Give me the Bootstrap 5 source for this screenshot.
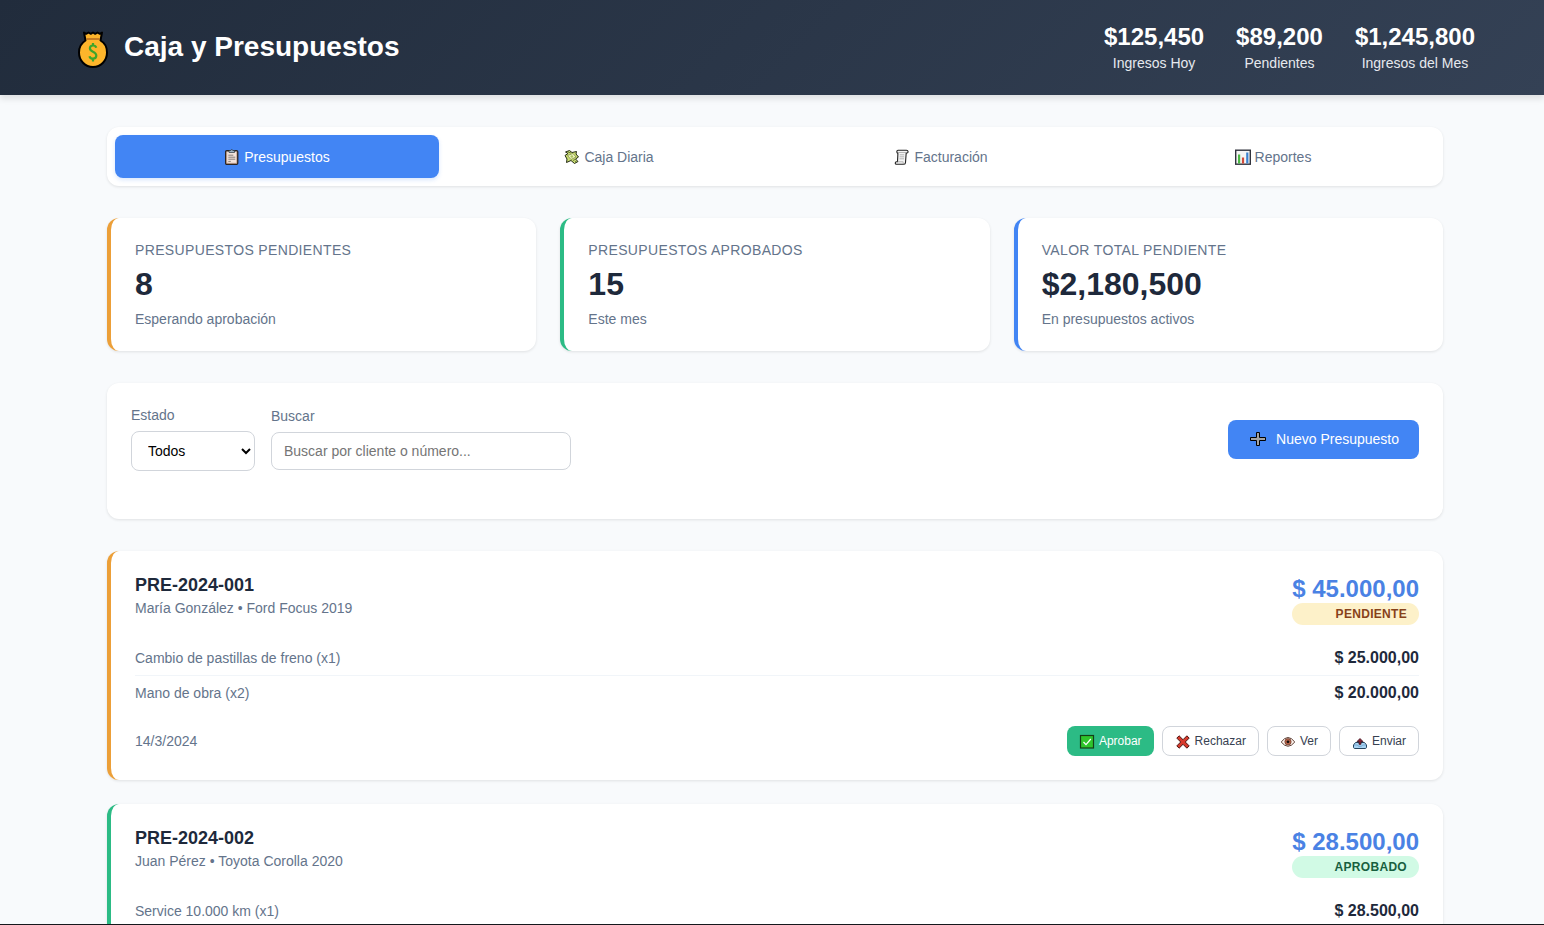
<!DOCTYPE html>
<html lang="es">
<head>
<meta charset="utf-8">
<meta name="viewport" content="width=device-width, initial-scale=1">
<title>Caja y Presupuestos</title>
<link href="https://cdn.jsdelivr.net/npm/bootstrap@5.3.0/dist/css/bootstrap.min.css" rel="stylesheet">
<style>
  :root { --ink: #1e293b; --slate: #64748b; --blue: #4285f4; --green: #2cbb85; --orange: #ec9f38; }
  body {
    font-family: "Liberation Sans", Arial, sans-serif;
    font-size: 14px; line-height: 16px; color: var(--ink);
    background: #f8fafc; border-bottom: 1px solid #15181c;
  }
  svg { flex: none; }
  .page-head {
    background: linear-gradient(135deg, #212c3c, #344155);
    box-shadow: 0 4px 6px rgba(0,0,0,.1);
    z-index: 1; padding: 24px 0 24px 6px;
  }
  .head-in, .page-in { width: 100%; max-width: 1400px; margin: 0 auto; }
  .page-scroll { overflow-y: auto; scrollbar-width: none; padding-left: 6px; }
  .page-scroll::-webkit-scrollbar { display: none; }
  .page-in { padding: 32px; }
  .brand-title { font-size: 28px; line-height: 32px; font-weight: 700; }
  .brand-gap { gap: 12px; padding-bottom: 2px; }
  .head-stats { gap: 32px; }
  .head-value { font-size: 24px; line-height: 25px; font-weight: 700; margin-bottom: 6px; }
  .head-label { color: #e6e9ee; }
  .panel { background: #fff; border-radius: 12px; box-shadow: 0 1px 3px rgba(0,0,0,.1); }
  .panel-edge { border-left: 4px solid var(--blue); padding: 24px; }
  .edge-orange { border-left-color: var(--orange); }
  .edge-green { border-left-color: var(--green); }
  .tab-btn {
    flex: 1 1 0; border: 0; border-radius: 8px; background: none; color: var(--slate);
    height: 43px; padding: 0 8px; display: flex; align-items: center; justify-content: center; gap: 4px;
  }
  .tab-btn.active { background: var(--blue); color: #fff; box-shadow: 0 2px 4px rgba(66,133,244,.2); }
  .stat-grid { display: grid; grid-template-columns: repeat(auto-fit, minmax(280px, 1fr)); gap: 24px; }
  .stat-name { color: var(--slate); text-transform: uppercase; letter-spacing: .025em; }
  .stat-value { font-size: 32px; line-height: 37px; font-weight: 700; }
  .muted { color: var(--slate); }
  .field { border: 1px solid #d1d5db; border-radius: 8px; background: #fff; }
  select.field { width: 124px; height: 40px; padding: 0 0 0 12px; color: #000; }
  input.field { width: 300px; max-width: 100%; height: 38px; padding: 0 12px; }
  input.field::placeholder { color: #757575; }
  .new-btn {
    border: 0; border-radius: 8px; background: var(--blue); color: #fff;
    height: 39px; padding: 0 20px; display: flex; align-items: center; gap: 8px;
  }
  .quote-no { font-size: 18px; line-height: 20px; font-weight: 700; margin-bottom: 5px; }
  .quote-sum { font-size: 24px; line-height: 28px; font-weight: 700; color: #4a82e4; }
  .state-pill {
    border-radius: 20px; padding: 4px 12px; font-size: 12px; line-height: 14px;
    font-weight: 700; letter-spacing: .025em; text-transform: uppercase;
  }
  .pill-wait { background: #fdf1c9; color: #87421a; }
  .pill-ok { background: #d1fae5; color: #17603f; }
  .quote-line { padding: 8px 0; line-height: 18px; border-bottom: 1px solid #f1f5f9; }
  .quote-line:last-child { border-bottom: 0; }
  .quote-line b { font-size: 16px; }
  .act-btn {
    display: flex; align-items: center; gap: 4px; height: 30px; padding: 0 12px;
    font-size: 12px; line-height: 14px; border: 1px solid #d1d5db; border-radius: 8px;
    background: #fff; color: #374151;
  }
  .act-go { background: var(--green); border: 0; color: #fff; }
</style>
</head>
<body class="vh-100 d-flex flex-column overflow-hidden">

<header class="page-head text-white position-relative">
  <div class="head-in d-flex flex-wrap justify-content-between align-items-center">
    <div class="d-flex align-items-center brand-gap">
      <svg width="37" height="44" viewBox="0 0 37 44" aria-hidden="true">
        <path d="M9 7.500L11.200 8.800L13.500 7.500L15.800 8.800L18 7.500L20.200 8.800L22.500 7.500L24.800 8.800L27 7.500L25.500 15.500C30 18 32 22.500 32 27.500C32 35.500 26 42 18 42S4 35.500 4 27.500C4 22.500 6.500 18 10.500 15.500Z" fill="#fdb52b" stroke="#000" stroke-width="2" stroke-linejoin="round"/>
        <path d="M11.500 14H24.500" stroke="#a4581c" stroke-width="1.200"/>
        <path d="M21.200 22.800C20.800 21 19.500 20.500 18 20.500C16 20.500 14.900 21.700 14.900 23.300C14.900 27.400 21.300 26 21.300 30.600C21.300 32.500 19.900 33.700 18 33.700C16.200 33.700 14.900 32.900 14.500 31.200M18 18V21M18 33V36.500" fill="none" stroke="#3da52c" stroke-width="2.200"/>
      </svg>
      <h1 class="brand-title mb-0">Caja y Presupuestos</h1>
    </div>
    <div class="head-stats d-flex text-center">
      <div><div class="head-value">$125,450</div><div class="head-label">Ingresos Hoy</div></div>
      <div><div class="head-value">$89,200</div><div class="head-label">Pendientes</div></div>
      <div><div class="head-value">$1,245,800</div><div class="head-label">Ingresos del Mes</div></div>
    </div>
  </div>
</header>

<div class="page-scroll flex-grow-1">
<main class="page-in">

  <nav class="panel d-flex gap-2 p-2 mb-0">
    <button type="button" class="tab-btn active">
      <svg width="16" height="16" viewBox="0 0 16 16" aria-hidden="true">
        <rect x="1.700" y="1.700" width="12" height="13.600" rx="1" fill="#f3e4dc" stroke="#2b2422" stroke-width="1.400"/>
        <path d="M2.700 2.700V14.300H12.700V2.700" fill="none" stroke="#b98f78" stroke-width=".7"/>
        <path d="M5 1.500h1.600a1.200 1.200 0 0 1 2.300 0h1.600v2H5z" fill="#9fb4c4" stroke="#2b3640" stroke-width=".7"/>
        <path d="M4.300 6.200h5M4.300 8.200h7M4.300 10.200h7M4.300 12.400h2.500" stroke="#7c7471" stroke-width=".9"/>
      </svg>
      Presupuestos
    </button>
    <button type="button" class="tab-btn">
      <svg width="16" height="16" viewBox="0 0 16 16" aria-hidden="true">
        <path d="M5.500 1.500L8 3.500L12.500 2.500L12 5L14.500 8L11.500 10L14 12.500L10.500 14.500L7 11.500L2.500 13.500L3 10L1 6.500L4 4.500L1.500 3Z" fill="#c9dd72" stroke="#252b16" stroke-width="1"/>
        <path d="M3.500 6.500L9 4.500L12 8L7 10.500Z" fill="#eff5bd" stroke="#788440" stroke-width=".7"/>
        <circle cx="7.800" cy="7.500" r="1.300" fill="#a9c060"/>
        <path d="M9 11.500l2-1M11 13l1.500-1M4 3l3 1" stroke="#51602a" stroke-width=".8"/>
      </svg>
      Caja Diaria
    </button>
    <button type="button" class="tab-btn">
      <svg width="16" height="16" viewBox="0 0 16 16" aria-hidden="true">
        <path d="M4 1.200H12.500C14.500 1.200 14.500 4 13 4H12.200L11.500 13.500C11.400 15 10.800 15.300 10 15.300H2.500C.8 15.300 .9 12.800 2.500 12.800H3.500L3.900 4.500C2.300 3.500 2.600 1.200 4 1.200Z" fill="#f4f4f4" stroke="#222" stroke-width="1.100" stroke-linejoin="round"/>
        <path d="M3.500 12.800H9.200C9 14 9.300 15 10 15.300M4 3.500H12.500M5.700 5.800h4.500M5.600 7.800h4.500M5.500 9.800h4.500" fill="none" stroke="#999" stroke-width=".7"/>
      </svg>
      Facturación
    </button>
    <button type="button" class="tab-btn">
      <svg width="16" height="16" viewBox="0 0 16 16" aria-hidden="true">
        <rect x=".7" y="1.200" width="14.600" height="14" fill="#f5f5f5" stroke="#30333d" stroke-width="1.400"/>
        <path d="M3 5.500h2.200v9H3z" fill="#4cb944"/><path d="M6.900 8.500h2.200v6H6.900z" fill="#d04a3a"/><path d="M11.200 3.500h2.200v11h-2.200z" fill="#3b82d0"/>
      </svg>
      Reportes
    </button>
  </nav>

  <section class="stat-grid my-4 py-2">
    <div class="panel panel-edge edge-orange">
      <div class="stat-name mb-2">Presupuestos Pendientes</div>
      <div class="stat-value mb-2">8</div>
      <div class="muted">Esperando aprobación</div>
    </div>
    <div class="panel panel-edge edge-green">
      <div class="stat-name mb-2">Presupuestos Aprobados</div>
      <div class="stat-value mb-2">15</div>
      <div class="muted">Este mes</div>
    </div>
    <div class="panel panel-edge">
      <div class="stat-name mb-2">Valor Total Pendiente</div>
      <div class="stat-value mb-2">$2,180,500</div>
      <div class="muted">En presupuestos activos</div>
    </div>
  </section>

  <section class="panel p-4">
    <div class="d-flex flex-wrap justify-content-between align-items-center mb-4">
      <div class="d-flex flex-wrap align-items-center gap-3">
        <div class="d-flex flex-column gap-2">
          <label class="muted" for="estado">Estado</label>
          <select class="field" id="estado"><option>Todos</option><option>Pendiente</option><option>Aprobado</option></select>
        </div>
        <div class="d-flex flex-column gap-2">
          <label class="muted" for="buscar">Buscar</label>
          <input class="field" id="buscar" type="text" placeholder="Buscar por cliente o número...">
        </div>
      </div>
      <button type="button" class="new-btn">
        <svg width="20" height="18" viewBox="0 0 20 18" aria-hidden="true">
          <path d="M8.500 2.500h3v5h5v3h-5v5h-3v-5h-6v-3h6z" fill="#a3a3a3" stroke="#000" stroke-width="1"/>
          <path d="M16 7.500h1.500v3H16" fill="#a3a3a3" stroke="#000" stroke-width="1"/>
          <path d="M14 8h3v2h-3z" fill="#a3a3a3"/>
        </svg>
        Nuevo Presupuesto
      </button>
    </div>
  </section>

  <section class="d-flex flex-column gap-4 mt-4 pt-2">
    <article class="panel panel-edge edge-orange">
      <div class="d-flex justify-content-between mb-3">
        <div>
          <h2 class="quote-no">PRE-2024-001</h2>
          <div class="muted">María González • Ford Focus 2019</div>
        </div>
        <div class="text-end">
          <div class="quote-sum">$ 45.000,00</div>
          <div class="state-pill pill-wait">Pendiente</div>
        </div>
      </div>
      <div class="mb-3">
        <div class="quote-line d-flex justify-content-between"><span class="muted">Cambio de pastillas de freno (x1)</span><b>$ 25.000,00</b></div>
        <div class="quote-line d-flex justify-content-between"><span class="muted">Mano de obra (x2)</span><b>$ 20.000,00</b></div>
      </div>
      <div class="d-flex flex-wrap justify-content-between align-items-center">
        <div class="muted">14/3/2024</div>
        <div class="d-flex flex-wrap gap-2">
          <button type="button" class="act-btn act-go">
            <svg width="16" height="15" viewBox="0 0 16 15" aria-hidden="true">
              <rect x="1.500" y="1.500" width="13" height="12.500" fill="#2fc52c" stroke="#143f17" stroke-width="1.200"/>
              <path d="M4.500 8l2.500 2.700L11.800 5" fill="none" stroke="#fff" stroke-width="1.200"/>
            </svg>
            Aprobar
          </button>
          <button type="button" class="act-btn">
            <svg width="16" height="15" viewBox="0 0 16 15" aria-hidden="true">
              <path d="M4.100 1.800L8 5.700L11.900 1.800L14.200 4.100L10.300 8L14.200 11.900L11.900 14.200L8 10.300L4.100 14.200L1.800 11.900L5.700 8L1.800 4.100Z" fill="#d83a2c" stroke="#4b120e" stroke-width="1"/>
            </svg>
            Rechazar
          </button>
          <button type="button" class="act-btn">
            <svg width="16" height="15" viewBox="0 0 16 15" aria-hidden="true">
              <path d="M1.200 8Q8 -1 14.800 8Q8 16.500 1.200 8Z" fill="#fff4ee" stroke="#5b3f36" stroke-width="1"/>
              <circle cx="8" cy="7.800" r="3.200" fill="#b8654a" stroke="#572b20" stroke-width=".6"/><circle cx="8" cy="7.800" r="1.400" fill="#140e0c"/>
            </svg>
            Ver
          </button>
          <button type="button" class="act-btn">
            <svg width="16" height="15" viewBox="0 0 16 15" aria-hidden="true">
              <path d="M3.500 8.500H12.500L14.500 11V13C14.500 14 14 14.500 13 14.500H3C2 14.500 1.500 14 1.500 13V11Z" fill="#a9d4f4" stroke="#26445f" stroke-width="1"/>
              <path d="M2 11h3.500l1 1.300h3l1-1.300H14" fill="none" stroke="#6a9fc8" stroke-width=".8"/>
              <path d="M8 4.500L11 7.500H9V10.300H7V7.500H5Z" fill="#8c2436" stroke="#3c1220" stroke-width=".8"/>
            </svg>
            Enviar
          </button>
        </div>
      </div>
    </article>

    <article class="panel panel-edge edge-green">
      <div class="d-flex justify-content-between mb-3">
        <div>
          <h2 class="quote-no">PRE-2024-002</h2>
          <div class="muted">Juan Pérez • Toyota Corolla 2020</div>
        </div>
        <div class="text-end">
          <div class="quote-sum">$ 28.500,00</div>
          <div class="state-pill pill-ok">Aprobado</div>
        </div>
      </div>
      <div class="quote-line d-flex justify-content-between"><span class="muted">Service 10.000 km (x1)</span><b>$ 28.500,00</b></div>
    </article>
  </section>

</main>
</div>
<script src="https://cdn.jsdelivr.net/npm/bootstrap@5.3.0/dist/js/bootstrap.bundle.min.js"></script>
</body>
</html>
